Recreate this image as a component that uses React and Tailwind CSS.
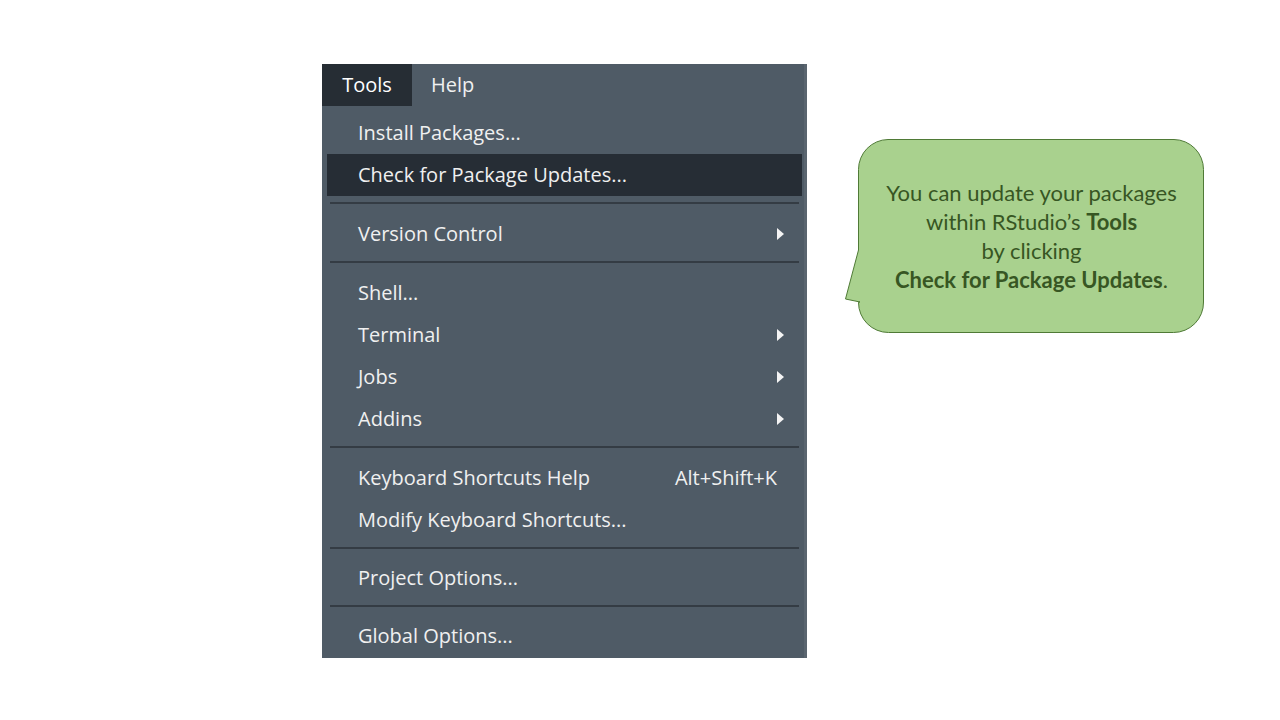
import React from "react";

const font = { fontFamily: '"Open Sans", "Noto Sans", sans-serif' };

function Arrow() {
  return (
    <svg width="7" height="12" viewBox="0 0 7 12" className="block">
      <path d="M0 0 L7 6 L0 12 Z" fill="#f4f4f4" />
    </svg>
  );
}

function Item({ label, active, sub, shortcut }) {
  return (
    <div
      className={
        "flex h-[42px] items-center justify-between pl-[31px] pr-[18px] " +
        (active ? "bg-[#262d35]" : "")
      }
    >
      <span>{label}</span>
      {sub && <Arrow />}
      {shortcut && <span className="mr-[7px]">{shortcut}</span>}
    </div>
  );
}

function Sep({ tight }) {
  return (
    <div className={"px-[3px] pt-[6px] " + (tight ? "pb-[8px]" : "pb-[9px]")}>
      <div className="h-[2px] bg-[#343c44]" />
    </div>
  );
}

function Menu() {
  return (
    <div
      className="flex w-[485px] flex-col bg-[#4f5b66] text-[20px] text-[#f0f0f0] shadow-[inset_-3px_0_0_#5a656f]"
      style={font}
    >
      <div className="flex h-[42px] items-stretch">
        <div className="flex w-[90px] items-center justify-center bg-[#262d34] text-white">Tools</div>
        <div className="flex items-center pl-[19px]">Help</div>
      </div>
      <div className="px-[5px] pt-[6px] pb-[1px]">
        <Item label="Install Packages..." />
        <Item label="Check for Package Updates..." active />
        <Sep />
        <Item label="Version Control" sub />
        <Sep />
        <Item label="Shell..." />
        <Item label="Terminal" sub />
        <Item label="Jobs" sub />
        <Item label="Addins" sub />
        <Sep />
        <Item label="Keyboard Shortcuts Help" shortcut="Alt+Shift+K" />
        <Item label="Modify Keyboard Shortcuts..." />
        <Sep tight />
        <Item label="Project Options..." />
        <Sep tight />
        <Item label="Global Options..." />
      </div>
    </div>
  );
}

function Callout() {
  return (
    <div className="relative mt-[75px] ml-[38px] h-[194px] w-[360px]">
      <svg width="360" height="194" viewBox="0 0 360 194" className="absolute left-0 top-0">
        <path
          d="M43 0.5 H329 A30 30 0 0 1 358.5 30.5 V163 A30 30 0 0 1 328.5 193.5 H43.5 A30 30 0 0 1 13.5 163.5 V163 L15 163 L0.5 160 L13.5 111 V30.5 A30 30 0 0 1 43 0.5 Z"
          fill="#a9d18e"
          stroke="#4f7a36"
          strokeWidth="1"
        />
      </svg>
      <div
        className="relative flex h-full flex-col items-center justify-center pl-[13px] text-center text-[22px] leading-[29px] text-[#375623]"
        style={{ fontFamily: 'Lato, "Noto Sans", sans-serif' }}
      >
        <div>You can update your packages</div>
        <div>
          within RStudio’s <b>Tools</b>
        </div>
        <div>by clicking</div>
        <div>
          <b>Check for Package Updates</b>.
        </div>
      </div>
    </div>
  );
}

export default function App() {
  return (
    <div className="flex h-[720px] w-[1280px] items-start bg-white pl-[322px] pt-[64px]">
      <Menu />
      <Callout />
    </div>
  );
}
